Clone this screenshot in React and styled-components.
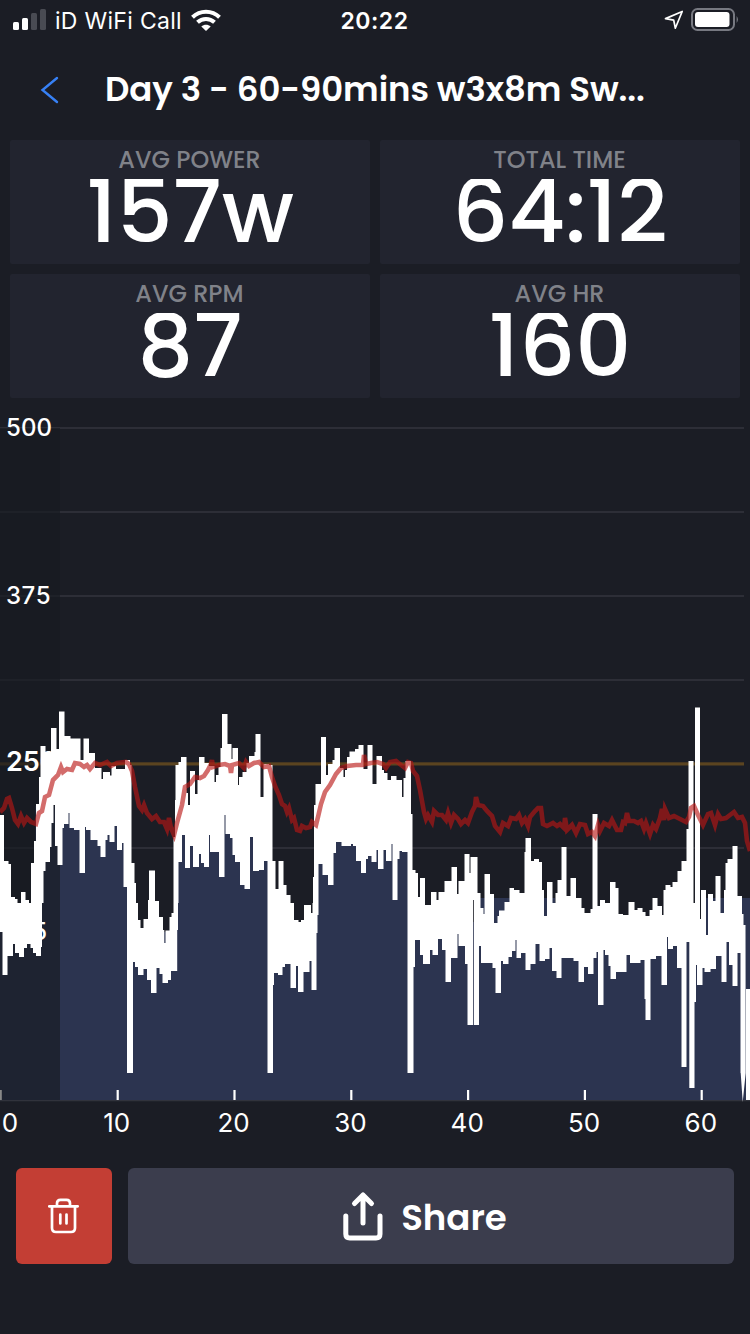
import React from "react";
import styled, { createGlobalStyle } from "styled-components";

const GlobalStyle = createGlobalStyle`
  * { box-sizing: border-box; }
  body { margin: 0; background: #1b1d25; }
`;

const Screen = styled.main`
  width: 750px;
  height: 1334px;
  overflow: hidden;
  display: flex;
  flex-direction: column;
  background: #1b1d25;
  color: #fff;
  font-family: Poppins, Inter, "Liberation Sans", sans-serif;
`;

const StatusBar = styled.div`
  height: 40px;
  flex: none;
  display: grid;
  grid-template-columns: 1fr auto 1fr;
  align-items: center;
  padding: 0 11px 0 13px;
  font-family: Inter, sans-serif;
  font-size: 23px;
`;

const StatusGroup = styled.div`
  display: flex;
  align-items: center;
  justify-content: ${(p) => (p.$end ? "flex-end" : "flex-start")};
  gap: ${(p) => (p.$end ? "7px" : "8px")};
`;

const Carrier = styled.span`
  letter-spacing: 0.3px;
  white-space: nowrap;
  padding-top: 2px;
  margin-right: 1px;
`;

const Clock = styled.span`
  font-weight: 600;
  letter-spacing: 0.5px;
  padding: 2px 3px 0 0;
`;

const Header = styled.header`
  height: 100px;
  flex: none;
  display: flex;
  align-items: center;
  padding-left: 40px;
`;

const Title = styled.h1`
  margin: 0 0 3px 45px;
  font-size: 34px;
  line-height: 50px;
  font-weight: 600;
  letter-spacing: -0.09px;
  white-space: nowrap;
`;

const Stats = styled.section`
  flex: none;
  display: grid;
  grid-template-columns: 360px 360px;
  grid-auto-rows: 124px;
  gap: 10px;
  padding: 0 10px;
`;

const StatCard = styled.div`
  display: flex;
  flex-direction: column;
  align-items: center;
  background: #22242f;
  border-radius: 2px;
  padding-top: 6px;
`;

const StatLabel = styled.span`
  font-size: 23.9px;
  line-height: 28px;
  font-weight: 500;
  color: #808289;
  padding-right: 1px;
`;

const StatValue = styled.span`
  display: block;
  margin-top: 5px;
  font-size: 87.5px;
  line-height: 66px;
  font-weight: 500;
  overflow: hidden;
`;

const Chart = styled.svg`
  display: block;
  flex: none;
  width: 750px;
  height: 752px;
  font-family: Inter, sans-serif;
  fill: #fff;
`;

const Actions = styled.footer`
  display: flex;
  gap: 16px;
  padding: 18px 16px 0;
`;

const Button = styled.button`
  border: 0;
  padding: 0;
  height: 96px;
  border-radius: 6px;
  display: flex;
  align-items: center;
  justify-content: center;
  gap: 18px;
  color: #fff;
  font: 600 35.6px Poppins, Inter, sans-serif;
  background: ${(p) => (p.$danger ? "#c33e34" : "#3b3d4d")};
  ${(p) => (p.$danger ? "width: 96px;" : "flex: 1; padding-right: 12px;")}
`;

const ButtonLabel = styled.span`
  padding-top: 2px;
`;

const stats = [
  { label: "AVG POWER", value: "157w" },
  { label: "TOTAL TIME", value: "64:12" },
  { label: "AVG RPM", value: "87" },
  { label: "AVG HR", value: "160" },
];

// Each pair is [x, y]; the level holds until the next x.
const powerMax = [
  [0,815],[4,861],[8.5,864],[11,897],[15,899],[17.5,903],[21,892],[25.5,900],[29,903],[31,863],[34,841],[36,804],[39,777],[40.5,746],[45.5,752],[51,728],[56.5,749],[59,711.5],[64.5,736],[70.5,738.5],[80.5,760],[83.5,738.5],[89,753],[95,768],[101.5,779],[103,772],[110,775.5],[111.5,766],[116,769],[125,760],[130,765],[131.5,863],[134.5,883],[136,903],[138,920],[140.5,928],[143.5,919],[148,900],[149,870.5],[155,901],[159,917],[163,930],[164.3,943],[165.5,930.5],[169.5,917],[171.5,913],[173.5,837],[175,800],[175.5,765],[178.5,762],[181,757],[186.5,793],[188,805],[190,771],[195,794],[197.5,780],[199,757],[204.5,763],[209,766],[214.5,782],[216,775],[218.5,767],[220.5,748],[222,714],[227.5,744],[231.5,759],[232.5,748],[238,785],[239,777],[242.5,772],[246.5,763],[249,756],[254.5,752],[255.5,734],[260.5,797],[263.5,764],[269,765],[272.5,861],[275.5,889],[278.5,861],[283.5,885],[286.5,895],[290.5,903],[294,920],[298.5,922],[301,920],[304,905],[311,913],[312.5,903],[313,877],[314,805],[315.5,784],[321,737],[326,775],[328,764],[332.5,760],[334.5,748],[340,768],[343.5,777],[345,770],[347,757],[349.5,751.5],[355,749],[358.5,745],[363.5,769],[367.5,745],[372.5,784],[376.5,756],[382,770],[384,773],[387.5,780],[391,776],[396.5,780],[402,797],[403.5,778],[405.5,761],[411,814],[412.5,870],[415.5,873],[418,897],[420,878],[425,905],[431,892],[436.5,900],[438.5,892],[444.5,881],[451.5,867],[457,894],[458.5,881],[464.5,854],[469.5,873],[470.5,857],[477.5,893],[480.5,908],[483.5,914],[484.5,874],[490,894],[494,923],[497.5,916],[499,910.5],[504.5,902],[509.5,888],[514,890],[519.5,893],[524.5,852],[525.5,838],[531,861],[534,859],[539,862],[542,890],[544,916],[547,882],[552.5,903],[555.5,893],[557.5,880],[561.5,847],[566.5,896],[570.5,878],[576,898],[581.5,908],[584.5,913],[590.5,909],[592.5,814],[597.5,906],[600,900],[605,903],[610,882],[615.5,888],[618.5,914],[623,915],[628.5,902],[634.5,910],[637.5,908],[642.5,912],[645.5,916],[649.5,910],[652.5,898],[657.5,906],[662,915],[663.5,890],[665.5,885],[670.5,887],[672.5,882],[677.5,871],[681.5,861],[686.5,829],[688.5,761],[693.5,903],[695,707.5],[700,919],[701,890],[706,935],[708,894],[713,901],[715.5,876],[720.5,913],[724,890],[725.5,863],[727.5,859],[732.5,846],[737.5,896],[742,914],[743.5,925],[745.5,925],
];

const powerMin = [
  [0,932],[2.5,975],[7.5,956],[13,944],[15,953],[19,957],[24,948],[27,944],[30.5,948],[33,953],[36,956],[41,947],[42,903],[43.5,871],[45.5,862],[50,847],[51.5,823],[53.5,805],[55,846],[57.5,865],[62.5,828],[64,824],[68.5,813],[69.5,828],[74,830],[79.5,873],[85,827],[86,830],[90.5,840],[97.5,846],[100.5,857],[105.5,840],[107.5,835],[109.5,842],[114.5,826],[117,850],[122,843],[123.5,887],[127,1073],[133,962],[135,967],[138,975],[143.5,969],[147,980],[151,993],[156.5,968],[159.5,974],[162.5,983],[168,980],[171,971],[177.2,930],[178,903],[178.5,862],[182,835],[185,868],[190,846],[193,867],[199,854],[201,863],[204,867],[209,835],[210,852],[219,877],[224.5,815],[225.5,834],[230,838],[232.5,855],[235,862],[240,885],[244.5,889],[250,837],[253,871],[259,870],[264,861],[267.5,1073],[273,985],[274,973],[278,975],[282.5,967],[285,964],[290.5,988],[296,966],[298,992],[303.5,972],[309.5,961],[311.5,990],[316.5,933],[317.5,915],[318.5,864],[322.5,875],[328,885],[333.5,853],[336,842],[341.5,846],[351,844],[353,846],[356,861],[361,873],[366,859],[368,856],[371.5,862],[376.5,850],[378,869],[383.5,850],[386,861],[391.5,844],[392.5,900],[397.5,859],[399.5,851],[402,852],[407.5,1073],[413.5,967],[415,940],[420,955],[423,964],[430,950],[432.5,955],[438,939],[442,950],[445.5,982],[451,958],[457.5,934],[458.5,946],[465,964],[467.5,1025],[473.2,900],[474,1025],[479,946],[481,963],[492.5,968],[495.5,993],[501,961],[503,964],[508.5,957],[512,951],[515.5,940],[516.5,958],[521,953],[525.5,970],[530.5,964],[535.5,944],[539.5,961],[545,959],[549.5,948],[552,971],[556.5,978],[561.5,958],[573.5,961],[578.5,982],[584,967],[588,974],[593.5,958],[596.5,952],[598,1005],[603.5,950],[605,955],[608.5,966],[610.5,979],[616,972],[626.5,955],[630,963],[640.5,960],[644.5,999],[645.5,1020],[650.5,959],[656,956],[661.5,985],[667,937],[668,949],[673,946],[677,968],[681.5,1067],[686.5,942],[689.3,1088],[694.5,1002],[696,965],[697,985],[702.5,968],[704.5,972],[710.5,969],[716,956],[721.5,982],[726.5,942],[729,965],[732.5,986],[737.5,953],[740.5,1073],
];

const heartRate = [
  [0,812],[4,808],[7,799],[9,798],[12,808],[15,820],[18,824],[21,816],[24,823],[27,818],[31,822],[36,824],[39,813],[42,811],[45,797],[49,795],[53,780],[58,775],[61,767],[63,772],[67,769],[72,770],[75,763],[80,764],[84,767],[87,765],[90,769],[95,763],[100,765],[107,762],[111,766],[117,763],[126,762],[129,764],[132,771],[135,787],[139,806],[142,810],[144,805],[147,813],[152,819],[156,816],[160,822],[164,822],[167,829],[169,818],[171,828],[174,835],[177,823],[182,805],[185,787],[190,784],[195,777],[200,778],[204,776],[208,770],[211,764],[212,760],[213,767],[219,765],[225,764],[230,766],[231,773],[232,765],[239,763],[244,768],[246,762],[249,766],[254,763],[259,762],[264,767],[269,766],[272,777],[275,786],[279,795],[282,804],[285,806],[287,812],[289,808],[292,820],[294,818],[297,830],[300,831],[302,826],[306,828],[310,827],[312,822],[316,825],[318,817],[321,804],[325,792],[330,785],[336,774],[341,768],[347,766],[356,765],[363,765],[364,755],[366,764],[371,763],[377,762],[383,764],[386,768],[390,762],[396,761],[401,765],[405,768],[408,762],[411,763],[413,771],[417,776],[420,790],[424,812],[426,819],[428,815],[432,822],[434,811],[438,815],[442,815],[446,820],[448,813],[451,823],[454,815],[458,819],[461,824],[465,820],[468,823],[472,812],[475,806],[476,797],[478,805],[483,806],[487,811],[492,816],[495,826],[500,832],[503,823],[508,826],[511,818],[516,819],[519,815],[522,823],[525,819],[528,826],[530,817],[535,811],[538,808],[541,808],[543,824],[547,826],[553,823],[557,826],[560,824],[564,828],[565,818],[567,830],[572,825],[576,833],[580,824],[585,825],[588,834],[592,832],[595,836],[598,825],[600,831],[604,823],[609,826],[612,820],[614,824],[617,830],[621,830],[623,822],[625,823],[627,813],[629,821],[634,821],[638,823],[641,821],[644,829],[646,823],[650,834],[653,825],[656,829],[660,818],[662,809],[664,820],[665,809],[669,818],[674,816],[680,819],[686,822],[689,817],[691,808],[694,806],[698,815],[703,825],[708,814],[711,813],[715,825],[718,814],[721,819],[726,818],[730,815],[734,812],[738,818],[742,817],[745,823],[747,841],[750,851],
];

function steps(levels, end) {
  return levels.map(([x, y], i) => {
    const next = i + 1 < levels.length ? levels[i + 1][0] : end;
    return `${x},${y} ${next},${y}`;
  });
}

const powerBand = [
  ...steps(powerMax, 745.5),
  "745.7,1073 742.7,1102",
  ...steps(powerMin, 740.7)
    .reverse()
    .map((pair) => pair.split(" ").reverse().join(" ")),
].join(" ");

const gridLines = [428, 512, 596, 680, 848];
const timeMarks = [10, 20, 30, 40, 50, 60];

function RideChart() {
  return (
    <Chart viewBox="0 398 750 752">
      {gridLines.map((y) => (
        <rect key={y} x="0" y={y - 1} width="744" height="2" fill="#2d2e37" />
      ))}
      <rect x="0" y="762.3" width="744" height="3.2" fill="#5b4420" />
      <path
        fill="#2c3450"
        d="M0 932H35V806H130V932H175V806H270V932H315V806H411V922H480V898H555V922H705V898H750V1100H0Z"
      />
      <rect x="0" y="1100" width="750" height="1.3" fill="#31333c" />
      <rect x="0" y="428" width="60" height="672" fill="#171a21" fillOpacity="0.65" />
      {timeMarks.map((m) => (
        <rect key={m} x={m * 11.68 - 0.2} y="1090" width="2.2" height="10" />
      ))}
      <rect x="0" y="1090" width="1.8" height="10" fill="#888" />
      <g fontSize="24" fontWeight="500">
        <text x="6" y="435.5" textLength="46">500</text>
        <text x="6" y="603.5" textLength="44.5">375</text>
        <text x="6" y="939.5" textLength="41">125</text>
      </g>
      <text x="6" y="771" fontSize="27" fontWeight="600">250</text>
      <polygon points={powerBand} />
      <rect x="746" y="989" width="4" height="111" />
      <polyline
        points={heartRate.map((p) => p.join(",")).join(" ")}
        fill="none"
        stroke="#b91614"
        strokeOpacity="0.63"
        strokeWidth="4.6"
      />
      <g fontSize="26" textAnchor="middle">
        <text x="10" y="1132">0</text>
        {timeMarks.map((m) => (
          <text key={m} x={m * 11.68} y="1132">
            {m}
          </text>
        ))}
      </g>
    </Chart>
  );
}

function SignalIcon() {
  return (
    <svg width="34" height="22" viewBox="0 0 34 22" fill="#fff">
      <rect x="0" y="13" width="6" height="8" rx="1.5" />
      <rect x="9" y="9" width="6" height="12" rx="1.5" />
      <rect x="18" y="4" width="6" height="17" rx="1.5" fill="#494b53" />
      <rect x="27" y="0" width="6" height="21" rx="1.5" fill="#494b53" />
    </svg>
  );
}

function WifiIcon() {
  return (
    <svg width="30" height="23" viewBox="0 0 30 23" fill="none" stroke="#fff" strokeWidth="4">
      <path d="M1.5 8.2C9 .9 21 .9 28.5 8.2" />
      <path d="M6.5 13.3C11.3 8.8 18.7 8.8 23.5 13.3" />
      <path d="M15 22L10.3 17.4C13 15.1 17 15.1 19.7 17.4Z" fill="#fff" stroke="none" />
    </svg>
  );
}

function LocationIcon() {
  return (
    <svg width="20" height="20" viewBox="0 0 20 20" fill="none" stroke="#fff" strokeWidth="1.7" strokeLinejoin="round">
      <path d="M18.2 1.5L11.3 18.2L9.7 10.1L1.5 8.6Z" />
    </svg>
  );
}

function BatteryIcon() {
  return (
    <svg width="48" height="24" viewBox="0 0 48 24">
      <rect x="1" y="1" width="42" height="21" rx="5.5" fill="none" stroke="#777981" strokeWidth="2" />
      <rect x="4" y="4" width="34.5" height="15" rx="3" fill="#fff" />
      <path d="M45.6 8Q48.4 11.5 45.6 15Z" fill="#777981" />
    </svg>
  );
}

export default function App() {
  return (
    <Screen>
      <GlobalStyle />
      <StatusBar>
        <StatusGroup>
          <SignalIcon />
          <Carrier>iD WiFi Call</Carrier>
          <WifiIcon />
        </StatusGroup>
        <Clock>20:22</Clock>
        <StatusGroup $end>
          <LocationIcon />
          <BatteryIcon />
        </StatusGroup>
      </StatusBar>
      <Header>
        <svg width="20" height="28" viewBox="0 0 20 28" fill="none" stroke="#3781f6" strokeWidth="2.4" strokeLinecap="round">
          <path d="M17 2L2.5 14L17 26" />
        </svg>
        <Title>Day 3 - 60-90mins w3x8m Sw...</Title>
      </Header>
      <Stats>
        {stats.map((s) => (
          <StatCard key={s.label}>
            <StatLabel>{s.label}</StatLabel>
            <StatValue>{s.value}</StatValue>
          </StatCard>
        ))}
      </Stats>
      <RideChart />
      <Actions>
        <Button $danger aria-label="Delete">
          <svg width="32" height="38" viewBox="0 0 32 38" fill="none" stroke="#fff" strokeWidth="2.7" strokeLinecap="round" strokeLinejoin="round">
            <path d="M1.3 9.3H29.7M9 8.5V6.3Q9 2.8 12.5 2.8H18.5Q22 2.8 22 6.3V8.5M4 9.5V31Q4 35 8 35H23Q27 35 27 31V9.5M12.3 17.5V26.5M18.5 17.5V26.5" />
          </svg>
        </Button>
        <Button>
          <svg width="40" height="50" viewBox="0 0 40 50" fill="none" stroke="#fff" strokeWidth="5" strokeLinecap="round" strokeLinejoin="round">
            <path d="M2.8 25V43Q2.8 47 6.8 47H33Q37 47 37 43V25M20 32V4M11.5 12.5L20 4L28.5 12.5" />
          </svg>
          <ButtonLabel>Share</ButtonLabel>
        </Button>
      </Actions>
    </Screen>
  );
}
